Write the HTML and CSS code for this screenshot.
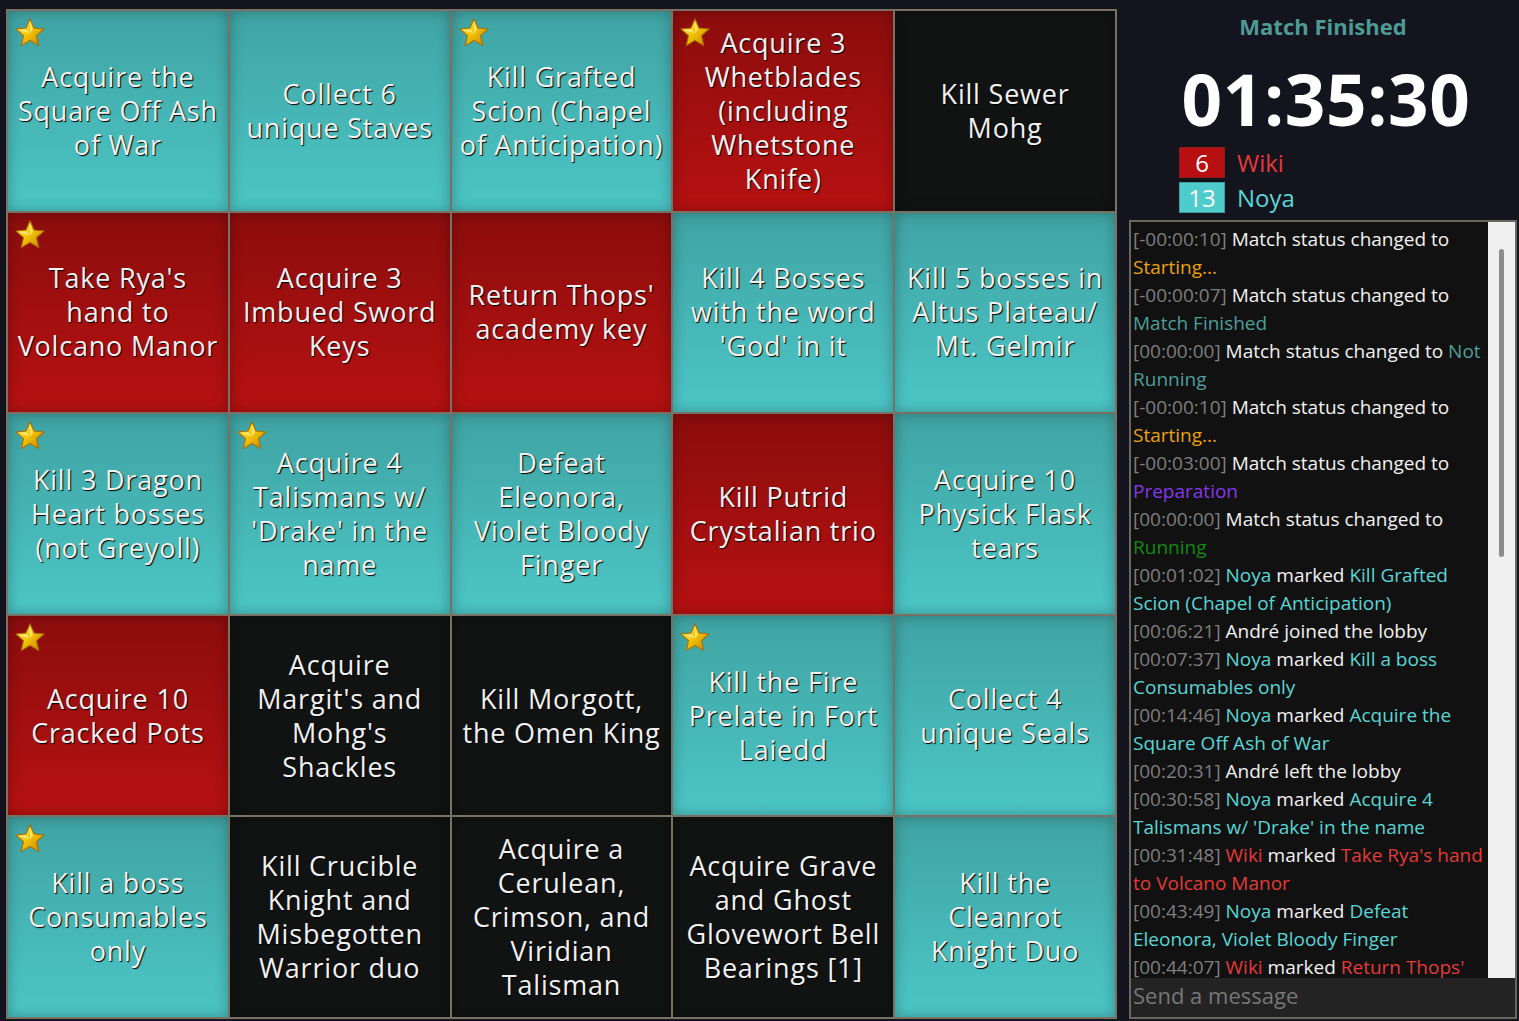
FILE: index.html
```html
<!DOCTYPE html>
<html lang="en">
<head>
<meta charset="utf-8">
<title>Bingo</title>
<link rel="stylesheet" href="styles.css">
</head>
<body>
<svg class="defs" width="0" height="0" aria-hidden="true">
  <defs>
    <linearGradient id="gold" x1="0" y1="0" x2="1" y2="1">
      <stop offset="0" stop-color="#fff6a0"/>
      <stop offset="0.45" stop-color="#f6c808"/>
      <stop offset="1" stop-color="#c37d00"/>
    </linearGradient>
    <symbol id="star" viewBox="0 0 28 28">
      <path d="M14 1.5 L17.53 9.65 L26.36 10.48 L19.71 16.35 L21.64 25.02 L14 20.5 L6.36 25.02 L8.29 16.35 L1.64 10.48 L10.47 9.65 Z" fill="url(#gold)" stroke="#a86c00" stroke-width="0.9" stroke-linejoin="round"/>
      <path d="M14 4.5 L16.6 10.8 L14 14.5 Z M4.8 11.4 L10.9 11 L14 14.5 Z" fill="#fffbd0" opacity="0.55"/>
    </symbol>
  </defs>
</svg>
<div class="app">
  <main class="board">
    <div class="cell teal"><svg class="star"><use href="#star"/></svg><span class="label">Acquire the<br>Square Off Ash<br>of War</span></div>
    <div class="cell teal"><span class="label">Collect 6<br>unique Staves</span></div>
    <div class="cell teal"><svg class="star"><use href="#star"/></svg><span class="label">Kill Grafted<br>Scion (Chapel<br>of Anticipation)</span></div>
    <div class="cell red"><svg class="star"><use href="#star"/></svg><span class="label">Acquire 3<br>Whetblades<br>(including<br>Whetstone<br>Knife)</span></div>
    <div class="cell black"><span class="label">Kill Sewer<br>Mohg</span></div>

    <div class="cell red"><svg class="star"><use href="#star"/></svg><span class="label">Take Rya's<br>hand to<br>Volcano Manor</span></div>
    <div class="cell red"><span class="label">Acquire 3<br>Imbued Sword<br>Keys</span></div>
    <div class="cell red"><span class="label">Return Thops'<br>academy key</span></div>
    <div class="cell teal"><span class="label">Kill 4 Bosses<br>with the word<br>'God' in it</span></div>
    <div class="cell teal"><span class="label">Kill 5 bosses in<br>Altus Plateau/<br>Mt. Gelmir</span></div>

    <div class="cell teal"><svg class="star"><use href="#star"/></svg><span class="label">Kill 3 Dragon<br>Heart bosses<br>(not Greyoll)</span></div>
    <div class="cell teal"><svg class="star"><use href="#star"/></svg><span class="label">Acquire 4<br>Talismans w/<br>'Drake' in the<br>name</span></div>
    <div class="cell teal"><span class="label">Defeat<br>Eleonora,<br>Violet Bloody<br>Finger</span></div>
    <div class="cell red"><span class="label">Kill Putrid<br>Crystalian trio</span></div>
    <div class="cell teal"><span class="label">Acquire 10<br>Physick Flask<br>tears</span></div>

    <div class="cell red"><svg class="star"><use href="#star"/></svg><span class="label">Acquire 10<br>Cracked Pots</span></div>
    <div class="cell black"><span class="label">Acquire<br>Margit's and<br>Mohg's<br>Shackles</span></div>
    <div class="cell black"><span class="label">Kill Morgott,<br>the Omen King</span></div>
    <div class="cell teal"><svg class="star"><use href="#star"/></svg><span class="label">Kill the Fire<br>Prelate in Fort<br>Laiedd</span></div>
    <div class="cell teal"><span class="label">Collect 4<br>unique Seals</span></div>

    <div class="cell teal"><svg class="star"><use href="#star"/></svg><span class="label">Kill a boss<br>Consumables<br>only</span></div>
    <div class="cell black"><span class="label">Kill Crucible<br>Knight and<br>Misbegotten<br>Warrior duo</span></div>
    <div class="cell black"><span class="label">Acquire a<br>Cerulean,<br>Crimson, and<br>Viridian<br>Talisman</span></div>
    <div class="cell black"><span class="label">Acquire Grave<br>and Ghost<br>Glovewort Bell<br>Bearings [1]</span></div>
    <div class="cell teal"><span class="label">Kill the<br>Cleanrot<br>Knight Duo</span></div>
  </main>

  <aside class="side">
    <div class="status">Match Finished</div>
    <div class="timer">01:35:30</div>
    <ul class="scores">
      <li class="score"><span class="count count-red">6</span><span class="player wiki">Wiki</span></li>
      <li class="score"><span class="count count-teal">13</span><span class="player noya">Noya</span></li>
    </ul>
    <section class="chat">
      <div class="log-wrap">
        <div class="log">
          <p class="entry"><span class="ts">[-00:00:10]</span> Match status changed to<br><span class="st-starting">Starting...</span></p>
          <p class="entry"><span class="ts">[-00:00:07]</span> Match status changed to<br><span class="st-muted">Match Finished</span></p>
          <p class="entry"><span class="ts">[00:00:00]</span> Match status changed to <span class="st-muted">Not</span><br><span class="st-muted">Running</span></p>
          <p class="entry"><span class="ts">[-00:00:10]</span> Match status changed to<br><span class="st-starting">Starting...</span></p>
          <p class="entry"><span class="ts">[-00:03:00]</span> Match status changed to<br><span class="st-prep">Preparation</span></p>
          <p class="entry"><span class="ts">[00:00:00]</span> Match status changed to<br><span class="st-running">Running</span></p>
          <p class="entry"><span class="ts">[00:01:02]</span> <span class="noya">Noya</span> marked <span class="noya">Kill Grafted<br>Scion (Chapel of Anticipation)</span></p>
          <p class="entry"><span class="ts">[00:06:21]</span> André joined the lobby</p>
          <p class="entry"><span class="ts">[00:07:37]</span> <span class="noya">Noya</span> marked <span class="noya">Kill a boss<br>Consumables only</span></p>
          <p class="entry"><span class="ts">[00:14:46]</span> <span class="noya">Noya</span> marked <span class="noya">Acquire the<br>Square Off Ash of War</span></p>
          <p class="entry"><span class="ts">[00:20:31]</span> André left the lobby</p>
          <p class="entry"><span class="ts">[00:30:58]</span> <span class="noya">Noya</span> marked <span class="noya">Acquire 4<br>Talismans w/ 'Drake' in the name</span></p>
          <p class="entry"><span class="ts">[00:31:48]</span> <span class="wiki">Wiki</span> marked <span class="wiki">Take Rya's hand<br>to Volcano Manor</span></p>
          <p class="entry"><span class="ts">[00:43:49]</span> <span class="noya">Noya</span> marked <span class="noya">Defeat<br>Eleonora, Violet Bloody Finger</span></p>
          <p class="entry"><span class="ts">[00:44:07]</span> <span class="wiki">Wiki</span> marked <span class="wiki">Return Thops'</span></p>
        </div>
        <div class="scrollbar"><div class="thumb"></div></div>
      </div>
      <div class="message">Send a message</div>
    </section>
  </aside>
</div>
</body>
</html>
```

FILE: styles.css
```css
* { box-sizing: border-box; }

html, body {
  margin: 0;
  padding: 0;
  background: #14141e;
  font-family: "Open Sans", "Noto Sans", "DejaVu Sans", sans-serif;
}

.defs { position: absolute; width: 0; height: 0; }

.app {
  display: flex;
  gap: 12px;
  padding: 9px 2px 0 6px;
  height: 1021px;
  overflow: hidden;
}

/* ---------- board ---------- */
.board {
  flex: 0 0 1111px;
  height: 1010px;
  display: grid;
  grid-template-columns: repeat(5, 1fr);
  grid-template-rows: repeat(5, 1fr);
  gap: 2px;
  padding: 2px;
  background: #7a7165;
}

.cell {
  position: relative;
  display: flex;
  align-items: center;
  justify-content: center;
  text-align: center;
  color: #f1f1f1;
  font-size: 27px;
  line-height: 34px;
  letter-spacing: 0.8px;
  text-shadow: 1px 1px 1px #000;
  box-shadow: inset 0 0 14px rgba(0, 0, 0, 0.28);
  padding: 0 2px;
}

.label { white-space: nowrap; }

.teal  { background: linear-gradient(180deg, #40a3a3 0%, #4cc6c6 100%); }
.red   { background: linear-gradient(180deg, #8c0d0d 0%, #b71111 100%); }
.black { background: #111313; }

.star {
  position: absolute;
  left: 6px;
  top: 6px;
  width: 32px;
  height: 32px;
}

/* ---------- side ---------- */
.side {
  flex: 0 0 388px;
  display: flex;
  flex-direction: column;
  align-items: stretch;
  margin-top: -9px;
}

.status {
  margin-top: 11px;
  text-align: center;
  color: #4e9a95;
  font-weight: 700;
  font-size: 22px;
  line-height: 30px;
}

.timer {
  margin-top: 23px;
  text-align: center;
  color: #ffffff;
  font-weight: 700;
  font-size: 71px;
  line-height: 70px;
  letter-spacing: 0.6px;
  padding-left: 6px;
}

.scores {
  list-style: none;
  margin: 13px 0 0;
  padding: 0 0 0 50px;
  display: flex;
  flex-direction: column;
  gap: 4px;
}

.score {
  display: flex;
  align-items: center;
  gap: 12px;
  height: 31px;
}

.count {
  width: 46px;
  height: 31px;
  display: flex;
  align-items: center;
  justify-content: center;
  color: #fff;
  font-size: 24px;
  border: 1px solid;
}

.count-red  { background: #b81010; border-color: #8f1a1a; }
.count-teal { background: #4ecbcb; border-color: #3b9c9c; }

.player { font-size: 24px; }

.wiki { color: #e43a3a; }
.noya { color: #5ad6d6; }

/* ---------- chat ---------- */
.chat {
  margin-top: 7px;
  height: 799px;
  border: 2px solid #6c675d;
  display: flex;
  flex-direction: column;
  background: #111111;
}

.log-wrap {
  flex: 1;
  display: flex;
  min-height: 0;
}

.log {
  flex: 1;
  overflow: hidden;
  padding: 3px 0 0 2px;
  color: #f2f2f2;
  font-size: 19px;
  line-height: 28px;
}

.entry { margin: 0; white-space: nowrap; }

.ts { color: #7e7e7e; }
.st-starting { color: #eba10a; }
.st-muted { color: #4f9e99; }
.st-prep { color: #8638e6; }
.st-running { color: #118a11; }

.scrollbar {
  flex: 0 0 27px;
  background: #f0f0f0;
  position: relative;
}

.thumb {
  position: absolute;
  left: 11px;
  top: 27px;
  width: 5px;
  height: 308px;
  border-radius: 3px;
  background: #8c8c8c;
}

.message {
  height: 39px;
  background: #232323;
  color: #777777;
  font-size: 22px;
  line-height: 34px;
  padding-left: 2px;
}
```
